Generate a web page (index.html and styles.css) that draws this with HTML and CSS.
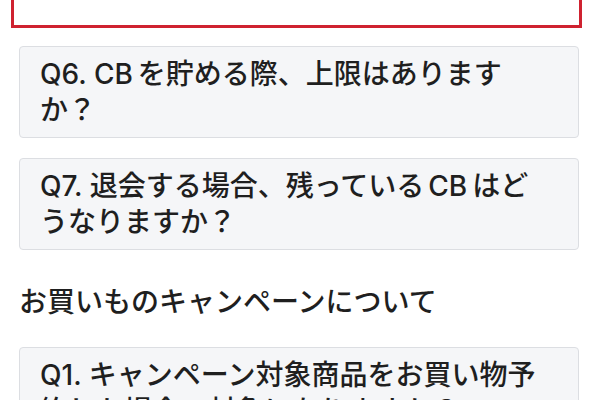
FILE: index.html
```html
<!DOCTYPE html>
<html lang="ja">
<head>
<meta charset="utf-8">
<link rel="stylesheet" href="styles.css">
</head>
<body>
<main class="faq">
  <div class="selected-box"></div>
  <div class="q-box">Q6. <span class="latin latin-lead">CB</span>を貯める際、上限はありますか？</div>
  <div class="q-box">Q7. 退会する場合、残っている<span class="latin">CB</span>はどうなりますか？</div>
  <h2 class="section-title">お買いものキャンペーンについて</h2>
  <div class="q-box">Q1. キャンペーン対象商品をお買い物予約した場合、対象になりますか？</div>
</main>
</body>
</html>
```
FILE: styles.css
```css
html, body {
  margin: 0;
  padding: 0;
  background: #ffffff;
}
body {
  overflow: hidden;
  height: 400px;
}
.faq {
  padding: 0 21px 0 19px;
  font-family: "Inter", "Noto Sans CJK JP", sans-serif;
  font-size: 28px;
  line-height: 36px;
  font-weight: 500;
  color: #1f1f1f;
}
.latin {
  margin: 0 5px 0 4px;
}
.latin-lead {
  margin-left: 0;
}
.selected-box {
  height: 84px;
  margin: -62px -3px 18px -8px;
  border: 3px solid #cf2230;
  background: #ffffff;
}
.q-box {
  background: #f5f6f8;
  border: 1px solid #dcdee2;
  border-radius: 4px;
  padding: 9px 28px 9px 20px;
  margin-bottom: 20px;
}
.section-title {
  margin: 34px 0 27px 0;
  font-size: 28px;
  line-height: 36px;
  font-weight: 500;
}
```
